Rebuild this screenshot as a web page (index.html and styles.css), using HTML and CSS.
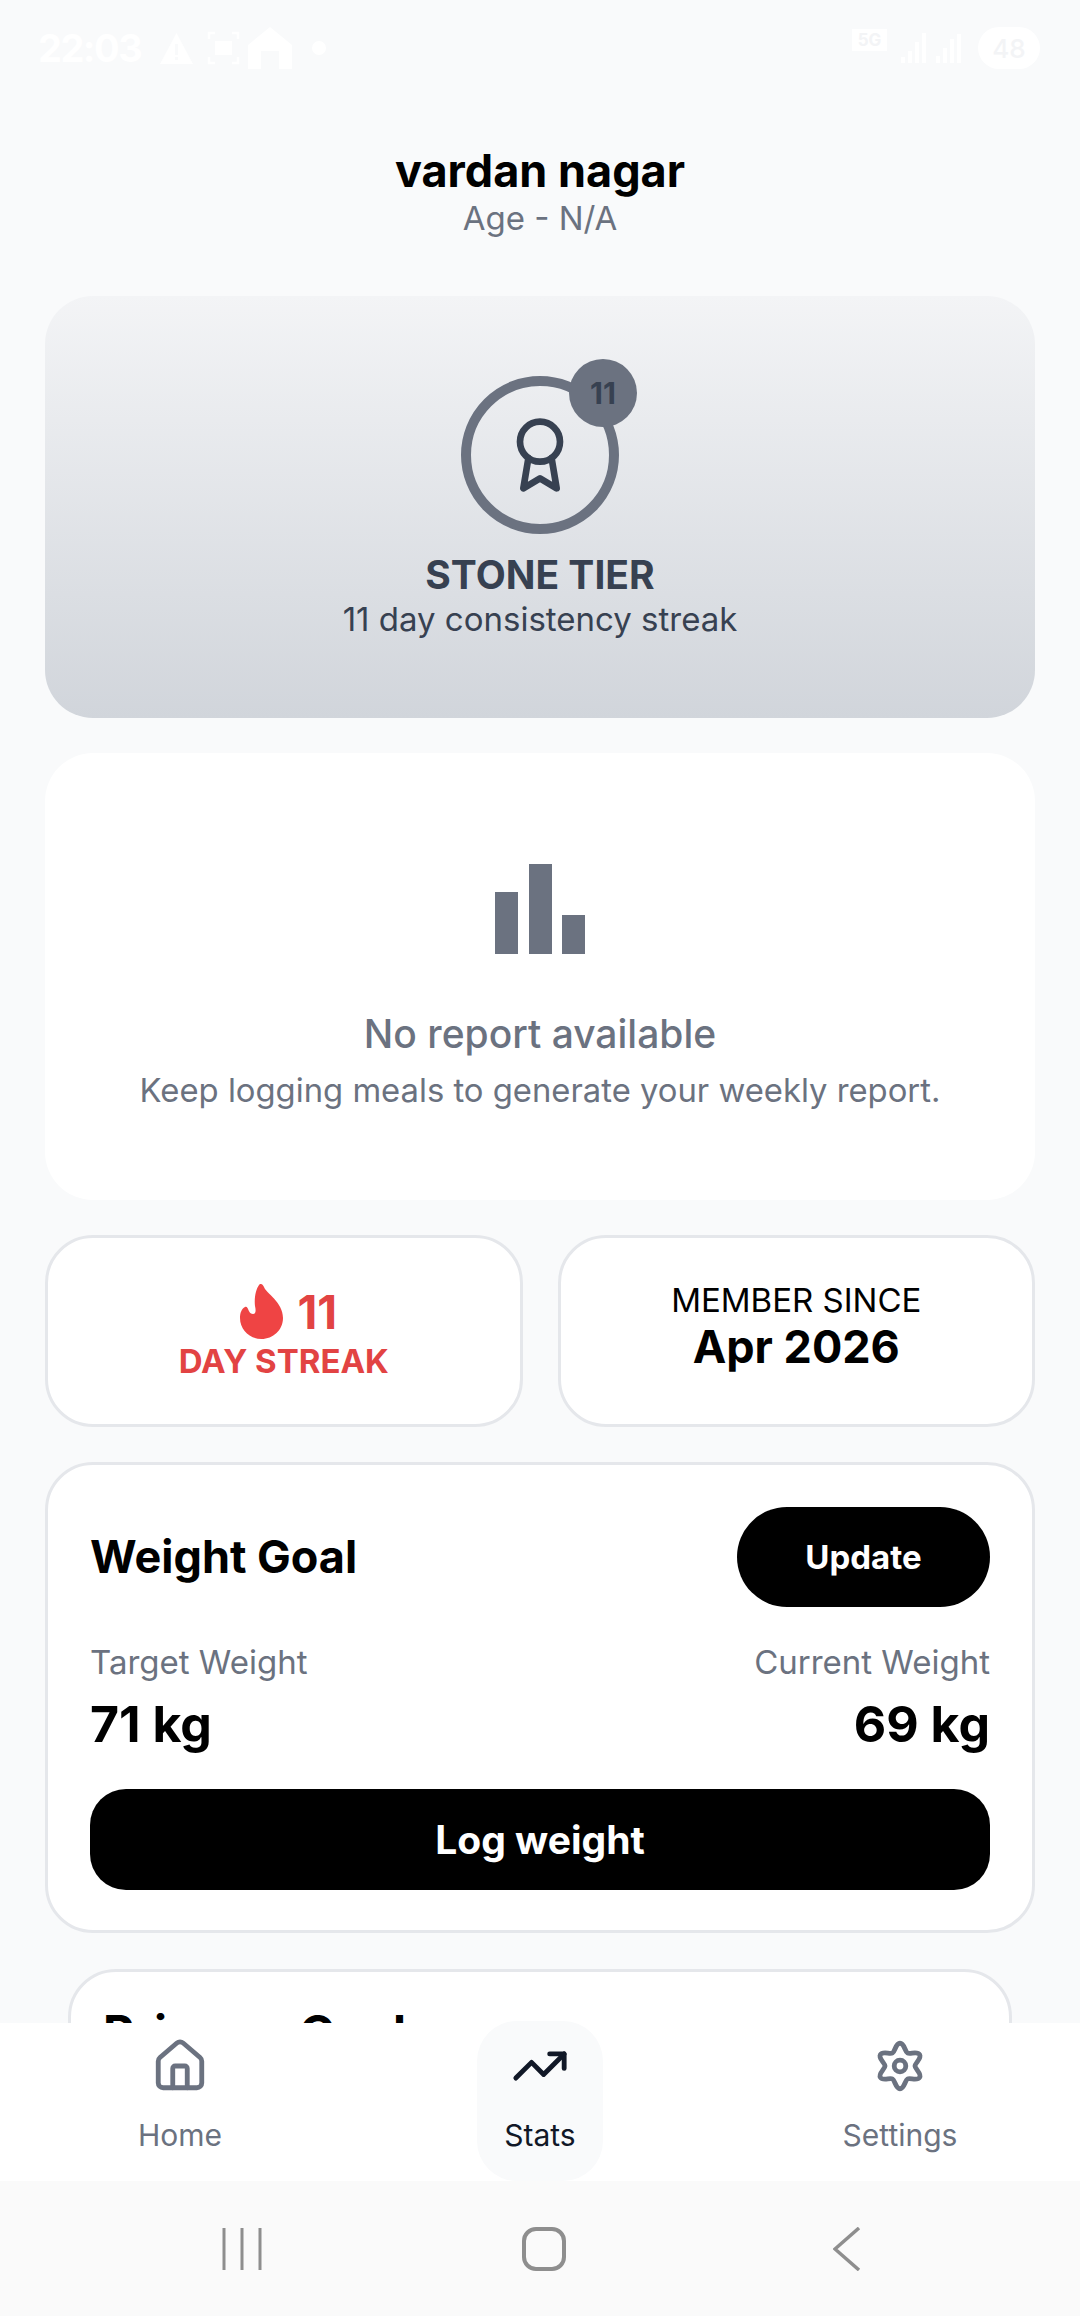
FILE: index.html
```html
<!DOCTYPE html>
<html lang="en">
<head>
<meta charset="utf-8">
<title>Stats</title>
<link rel="stylesheet" href="styles.css">
</head>
<body>
<div class="app">
  <main class="scroll">
    <div class="status">
      <div class="status-left">
        <span class="time">22:03</span>
        <svg class="st-tri" viewBox="0 0 33 31"><path fill-rule="evenodd" d="M16.5 0 33 31H0ZM15 11v11h3V11Zm0 13v3h3v-3Z" fill="#fff"/></svg>
        <svg class="st-frame" viewBox="0 0 33 34"><path d="M8 2H2v6M25 2h6v6M8 32H2v-6M25 32h6v-6" fill="none" stroke="#fff" stroke-width="2.5"/><rect x="8" y="10" width="17" height="14" fill="#fff"/></svg>
        <svg class="st-house" viewBox="0 0 44 42"><path d="M22 0 44 18v24H31V24H13v18H0V18Z" fill="#fff"/></svg>
        <span class="st-dot"></span>
      </div>
      <div class="status-right">
        <span class="st-5g">5G</span>
        <svg class="st-sig" viewBox="0 0 66 30"><path d="M1 30v-6h4v6zM8 30V18h4v12zM15 30V9h4v21zM22 30V0h4v30zM36 30v-7h4v7zM43 30V15h4v15zM50 30V6h4v24zM57 30V1h4v29z" fill="#fff"/></svg>
        <span class="st-batt">48</span>
      </div>
    </div>

    <header class="profile">
      <h1 class="name">vardan nagar</h1>
      <p class="age">Age - N/A</p>
    </header>

    <section class="tier">
      <div class="medal">
        <div class="ring">
          <svg class="award" viewBox="0 0 24 24" fill="none" stroke="#374151" stroke-width="2" stroke-linecap="round" stroke-linejoin="round"><circle cx="12" cy="8" r="6"/><path d="M15.477 12.89 17 22l-5-3-5 3 1.523-9.11"/></svg>
        </div>
        <span class="badge">11</span>
      </div>
      <h2 class="tier-title">STONE TIER</h2>
      <p class="tier-sub">11 day consistency streak</p>
    </section>

    <section class="report">
      <svg class="bars" viewBox="0 0 90 90" fill="#6b7280"><rect y="28" width="23" height="62"/><rect x="34" width="23" height="90"/><rect x="67" y="51" width="23" height="39"/></svg>
      <h2 class="report-title">No report available</h2>
      <p class="report-sub">Keep logging meals to generate your weekly report.</p>
    </section>

    <div class="pair">
      <section class="mini streak">
        <div class="streak-top">
          <svg class="flame" viewBox="0 0 43 55"><path d="M21 0C22 0 23 1 24 3 26 9 43 18 43 34 43 46 33 55 21.5 55 10 55 0 46 0 34 0 29 1.5 25 5 23 6 22.5 7 23 7.5 24 9 27 10 30 13 30 16 30 16 26 15 22 14 14 16 5 19 1 19.5.3 20 0 21 0Z" fill="#ef4444"/></svg>
          <span class="streak-num">11</span>
        </div>
        <span class="streak-label">DAY STREAK</span>
      </section>
      <section class="mini since">
        <span class="since-label">MEMBER SINCE</span>
        <span class="since-value">Apr 2026</span>
      </section>
    </div>

    <section class="card weight">
      <div class="weight-head">
        <h2 class="card-title">Weight Goal</h2>
        <button class="update">Update</button>
      </div>
      <div class="weight-vals">
        <div>
          <p class="w-label">Target Weight</p>
          <p class="w-value">71 kg</p>
        </div>
        <div class="right">
          <p class="w-label">Current Weight</p>
          <p class="w-value">69 kg</p>
        </div>
      </div>
      <button class="log">Log weight</button>
    </section>

    <section class="card primary">
      <h2 class="card-title primary-title">Primary Goal</h2>
    </section>
  </main>

  <nav class="tabs">
    <a class="tab">
      <svg class="tab-icon" viewBox="0 0 24 24" fill="none" stroke="#6b7280" stroke-width="2" stroke-linecap="round" stroke-linejoin="round"><path d="M15 21v-8a1 1 0 0 0-1-1h-4a1 1 0 0 0-1 1v8"/><path d="M3 10a2 2 0 0 1 .709-1.528l7-5.999a2 2 0 0 1 2.582 0l7 5.999A2 2 0 0 1 21 10v9a2 2 0 0 1-2 2H5a2 2 0 0 1-2-2z"/></svg>
      <span>Home</span>
    </a>
    <a class="tab active">
      <svg class="tab-icon" viewBox="0 0 24 24" fill="none" stroke="#111827" stroke-width="2" stroke-linecap="round" stroke-linejoin="round"><polyline points="22 7 13.5 15.5 8.5 10.5 2 17"/><polyline points="16 7 22 7 22 13"/></svg>
      <span>Stats</span>
    </a>
    <a class="tab">
      <svg class="tab-icon" viewBox="0 0 24 24" fill="none" stroke="#6b7280" stroke-width="2" stroke-linecap="round" stroke-linejoin="round"><path d="M12 2.6C13.8 2.6 14.06 6.03 15.1 6.63 16.14 7.23 19.24 5.74 20.14 7.3 21.04 8.86 18.2 10.8 18.2 12 18.2 13.2 21.04 15.14 20.14 16.7 19.24 18.26 16.14 16.77 15.1 17.37 14.06 17.97 13.8 21.4 12 21.4 10.2 21.4 9.94 17.97 8.9 17.37 7.86 16.77 4.76 18.26 3.86 16.7 2.96 15.14 5.8 13.2 5.8 12 5.8 10.8 2.96 8.86 3.86 7.3 4.76 5.74 7.86 7.23 8.9 6.63 9.94 6.03 10.2 2.6 12 2.6Z"/><circle cx="12" cy="12" r="2.4"/></svg>
      <span>Settings</span>
    </a>
  </nav>

  <div class="sysbar">
    <svg class="sys-lines" viewBox="0 0 40 44"><path d="M2 1v42M20 1v42M38 1v42" stroke="#8e8e8e" stroke-width="3" fill="none"/></svg>
    <svg class="sys-home" viewBox="0 0 44 44"><rect x="2" y="2" width="40" height="40" rx="12" stroke="#8e8e8e" stroke-width="4" fill="none"/></svg>
    <svg class="sys-back" viewBox="0 0 28 44"><path d="M26 1 2 22l24 21" stroke="#8e8e8e" stroke-width="3.5" fill="none"/></svg>
  </div>
</div>
</body>
</html>
```

FILE: styles.css
```css
* { box-sizing: border-box; }
html, body { margin: 0; padding: 0; }
body { font-family: Inter, "Liberation Sans", sans-serif; background: #f9fafb; }
h1, h2, p { margin: 0; }
.app { width: 1080px; height: 2316px; display: flex; flex-direction: column; overflow: hidden; }
.scroll { flex: 1; min-height: 0; overflow: hidden; padding: 0 45px; }

.status { height: 96px; margin: 0 -45px; padding: 24px 40px 0 38px; display: flex; justify-content: space-between; align-items: flex-start; color: #fff; }
.status-left, .status-right { display: flex; align-items: center; height: 48px; }
.time { font-size: 38px; font-weight: 700; letter-spacing: -1.5px; width: 122px; }
.st-tri { width: 33px; height: 31px; }
.st-frame { width: 33px; height: 34px; margin-left: 14px; }
.st-house { width: 44px; height: 42px; margin-left: 8px; }
.st-dot { width: 14px; height: 14px; border-radius: 50%; background: #fff; margin-left: 20px; }
.st-5g { width: 35px; height: 22px; margin-bottom: 16px; background: #fff; color: #f3f4f6; font-size: 17px; line-height: 22px; font-weight: 700; text-align: center; }
.st-sig { width: 66px; height: 30px; margin-left: 13px; }
.st-batt { width: 62px; height: 42px; border-radius: 21px; background: #fff; color: #f3f4f6; font-size: 26px; font-weight: 500; display: flex; align-items: center; justify-content: center; margin-left: 12px; }

.profile { margin-top: 48px; text-align: center; }
.name { font-size: 45px; line-height: 54px; font-weight: 700; color: #000; }
.age { font-size: 33px; line-height: 42px; color: #6b7280; margin-top: -1px; }

.tier { margin-top: 57px; height: 422px; border-radius: 48px; background: linear-gradient(180deg, #f3f4f6, #d1d5db); display: flex; flex-direction: column; align-items: center; padding-top: 80px; }
.medal { position: relative; width: 158px; height: 158px; }
.ring { width: 158px; height: 158px; border-radius: 50%; border: 10px solid #6b7280; display: flex; align-items: center; justify-content: center; }
.award { width: 80px; height: 80px; }
.badge { position: absolute; top: -17px; right: -18px; width: 68px; height: 68px; border-radius: 50%; background: #6b7280; color: #374151; font-size: 30px; font-weight: 700; display: flex; align-items: center; justify-content: center; }
.tier-title { margin-top: 18px; font-size: 39px; line-height: 46px; font-weight: 700; color: #374151; }
.tier-sub { margin-top: 0; font-size: 33px; line-height: 42px; color: #374151; }

.report { margin-top: 35px; height: 447px; border-radius: 48px; background: #fff; display: flex; flex-direction: column; align-items: center; padding-top: 111px; }
.bars { width: 90px; height: 90px; }
.report-title { margin-top: 57px; font-size: 39px; line-height: 46px; font-weight: 500; color: #6b7280; }
.report-sub { margin-top: 11px; font-size: 32.8px; line-height: 44px; color: #6b7280; }

.pair { margin-top: 35px; display: grid; grid-template-columns: 1fr 1fr; gap: 35px; }
.mini { height: 192px; border: 3px solid #e5e7eb; border-radius: 48px; background: #fff; display: flex; flex-direction: column; align-items: center; justify-content: center; }
.streak { padding-top: 3px; }
.since { padding-bottom: 10px; }
.streak-top { display: flex; align-items: center; gap: 14px; height: 55px; margin-left: 10px; }
.flame { width: 43px; height: 55px; }
.streak-num { font-size: 46px; font-weight: 700; color: #e24343; }
.streak-label { margin-top: 2px; font-size: 33px; line-height: 40px; font-weight: 700; color: #e24343; }
.since-label { font-size: 33px; line-height: 40px; color: #000; }
.since-value { margin-top: 2px; font-size: 45px; line-height: 50px; font-weight: 700; color: #000; }

.card { border: 3px solid #e5e7eb; border-radius: 48px; background: #fff; }
.weight { margin-top: 35px; height: 471px; padding: 42px 42px 0; }
.weight-head { display: flex; justify-content: space-between; align-items: center; height: 100px; }
.card-title { font-size: 45px; line-height: 54px; font-weight: 700; color: #000; }
.primary-title { font-size: 48px; }
.update { width: 253px; height: 100px; border: 0; border-radius: 50px; background: #000; color: #fff; font: 700 33px Inter, sans-serif; }
.weight-vals { margin-top: 34px; display: flex; justify-content: space-between; }
.right { text-align: right; }
.w-label { font-size: 33px; line-height: 42px; color: #6b7280; }
.w-value { margin-top: 12px; font-size: 50px; line-height: 58px; font-weight: 700; color: #000; }
.log { display: block; width: 100%; height: 101px; margin-top: 36px; border: 0; border-radius: 36px; background: #000; color: #fff; font: 700 39px Inter, sans-serif; }

.primary { margin: 36px 23px 0; height: 300px; padding: 34px 32px; }

.tabs { height: 158px; background: #fff; display: grid; grid-template-columns: repeat(3, 1fr); }
.tab { display: flex; flex-direction: column; align-items: center; color: #6b7280; font-size: 30px; padding-top: 14px; justify-self: center; width: 126px; border-radius: 40px; white-space: nowrap; }
.tab-icon { width: 58px; height: 58px; margin-bottom: 21px; }
.tab span { line-height: 38px; }
.active { background: #f9fafb; color: #111827; margin-top: -2px; height: 160px; padding-top: 16px; }

.sysbar { height: 135px; background: #fafafa; display: flex; align-items: center; padding-left: 222px; }
.sys-lines { width: 40px; height: 44px; }
.sys-home { width: 44px; height: 44px; margin-left: 260px; }
.sys-back { width: 28px; height: 44px; margin-left: 267px; }
```
